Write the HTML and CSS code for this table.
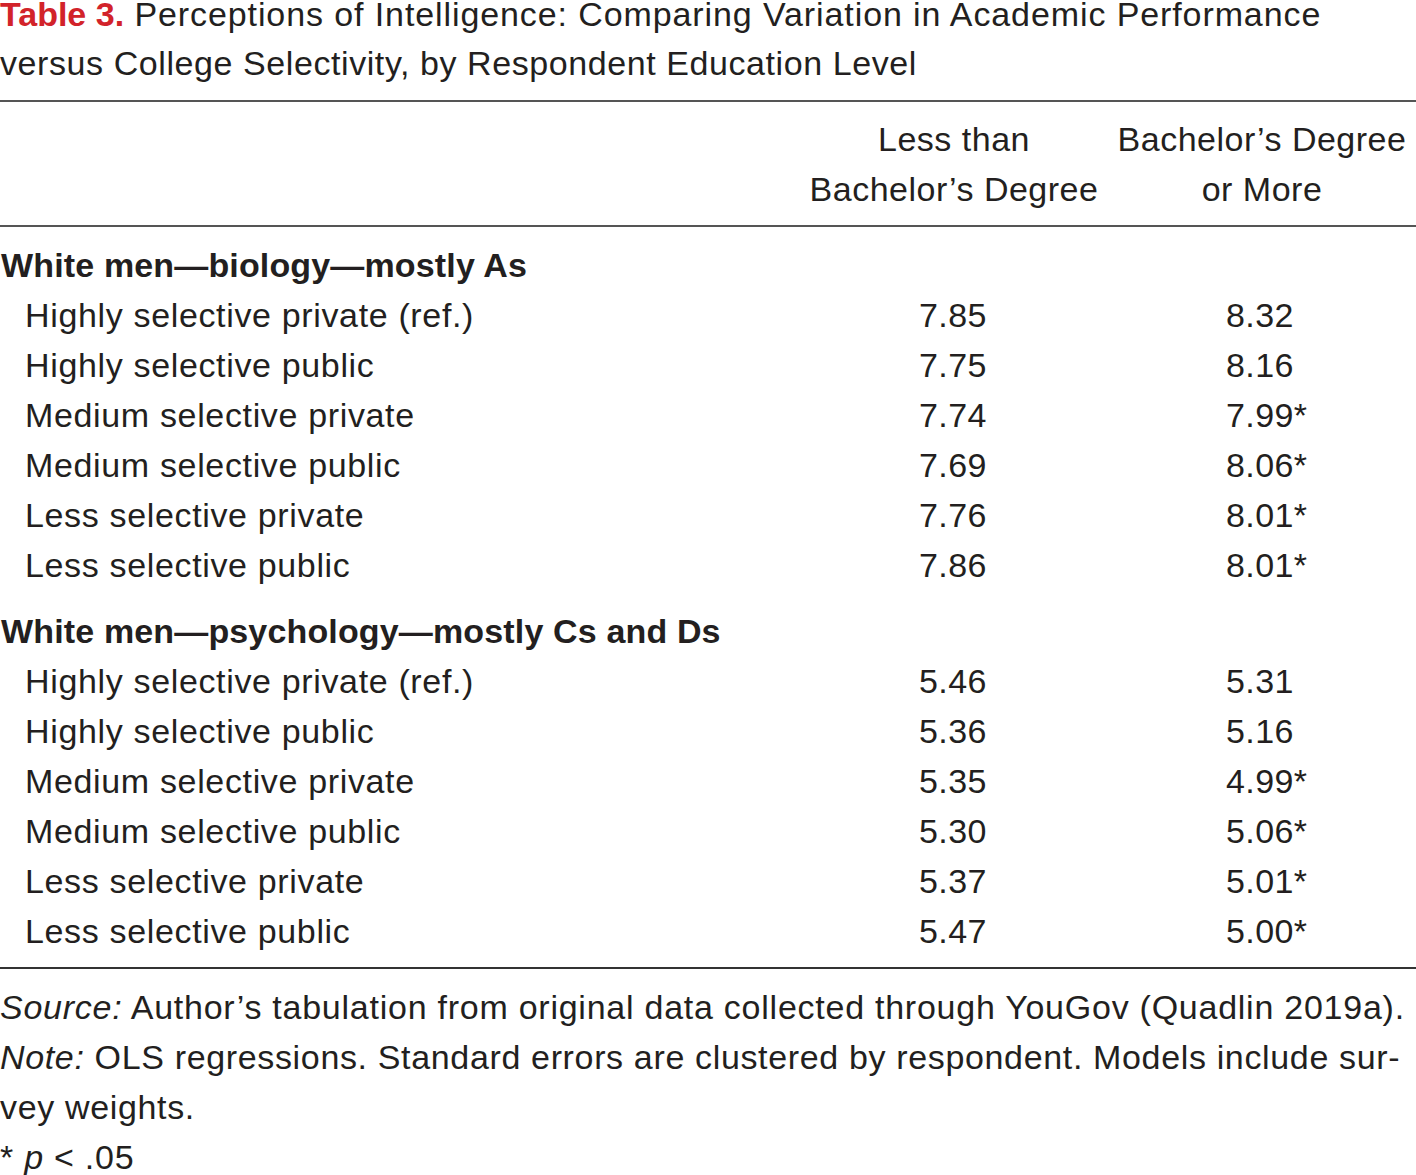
FILE: index.html
```html
<!DOCTYPE html>
<html lang="en">
<head>
<meta charset="utf-8">
<title>Table 3</title>
<link rel="stylesheet" href="styles.css">
</head>
<body>
<div class="page">
  <p class="caption"><span class="label">Table 3.</span> Perceptions of Intelligence: Comparing Variation in Academic Performance<br><span class="cap2">versus College Selectivity, by Respondent Education Level</span></p>
  <table class="data">
    <colgroup>
      <col class="c-label">
      <col class="c-val">
      <col class="c-val">
    </colgroup>
    <thead>
      <tr>
        <th class="h-empty"></th>
        <th>Less than<br>Bachelor’s Degree</th>
        <th>Bachelor’s Degree<br>or More</th>
      </tr>
    </thead>
    <tbody>
      <tr class="group first"><td colspan="3">White men—biology—mostly As</td></tr>
      <tr><td class="row-label">Highly selective private (ref.)</td><td class="num n1">7.85</td><td class="num n2">8.32</td></tr>
      <tr><td class="row-label">Highly selective public</td><td class="num n1">7.75</td><td class="num n2">8.16</td></tr>
      <tr><td class="row-label">Medium selective private</td><td class="num n1">7.74</td><td class="num n2">7.99*</td></tr>
      <tr><td class="row-label">Medium selective public</td><td class="num n1">7.69</td><td class="num n2">8.06*</td></tr>
      <tr><td class="row-label">Less selective private</td><td class="num n1">7.76</td><td class="num n2">8.01*</td></tr>
      <tr><td class="row-label">Less selective public</td><td class="num n1">7.86</td><td class="num n2">8.01*</td></tr>
      <tr class="group second"><td colspan="3">White men—psychology—mostly Cs and Ds</td></tr>
      <tr><td class="row-label">Highly selective private (ref.)</td><td class="num n1">5.46</td><td class="num n2">5.31</td></tr>
      <tr><td class="row-label">Highly selective public</td><td class="num n1">5.36</td><td class="num n2">5.16</td></tr>
      <tr><td class="row-label">Medium selective private</td><td class="num n1">5.35</td><td class="num n2">4.99*</td></tr>
      <tr><td class="row-label">Medium selective public</td><td class="num n1">5.30</td><td class="num n2">5.06*</td></tr>
      <tr><td class="row-label">Less selective private</td><td class="num n1">5.37</td><td class="num n2">5.01*</td></tr>
      <tr class="last"><td class="row-label">Less selective public</td><td class="num n1">5.47</td><td class="num n2">5.00*</td></tr>
    </tbody>
  </table>
  <div class="notes">
    <p><em>Source:</em> Author’s tabulation from original data collected through YouGov (Quadlin 2019a).</p>
    <p class="note2"><em>Note:</em> OLS regressions. Standard errors are clustered by respondent. Models include sur-<br>vey weights.</p>
    <p>* <em>p</em> &lt; .05</p>
  </div>
</div>
</body>
</html>
```

FILE: styles.css
```css
html, body {
  margin: 0;
  padding: 0;
  background: #ffffff;
}

body {
  font-family: "Liberation Sans", Arial, sans-serif;
  font-size: 34px;
  color: #231f20;
  letter-spacing: 0.6px;
}

.page {
  width: 1416px;
  overflow: hidden;
}

.caption {
  margin: 0;
  margin-top: -10px;
  line-height: 49px;
  padding-bottom: 12px;
  white-space: nowrap;
  letter-spacing: 0.9px;
}

.caption .label {
  color: #d2232a;
  font-weight: bold;
  letter-spacing: 0;
}

.caption .cap2 {
  letter-spacing: 0.58px;
}

.data {
  width: 1416px;
  border-collapse: collapse;
  table-layout: fixed;
}

.c-label { width: 800px; }
.c-val { width: 308px; }

.data thead tr {
  border-top: 2px solid #555;
  border-bottom: 2px solid #555;
}

.data th {
  font-weight: normal;
  text-align: center;
  line-height: 50px;
  padding: 12px 0 11px 0;
  white-space: nowrap;
  letter-spacing: 0.5px;
}

.data td {
  padding: 0;
  line-height: 50px;
  white-space: nowrap;
}

.group td {
  font-weight: bold;
  padding-left: 1px;
  letter-spacing: 0.15px;
}

.group.first td { padding-top: 13px; }
.group.second td { padding-top: 16px; }

.row-label {
  padding-left: 25px !important;
  letter-spacing: 0.65px;
}

.num { text-align: left; letter-spacing: 0.4px; }
.n1 { padding-left: 119px !important; }
.n2 { padding-left: 118px !important; }

.last td {
  padding-bottom: 11px !important;
}

.data tbody {
  border-bottom: 2px solid #333;
}

.notes {
  padding-top: 13px;
}

.notes p {
  margin: 0;
  line-height: 50px;
  white-space: nowrap;
  letter-spacing: 0.75px;
}

.notes .note2 {
  letter-spacing: 0.65px;
}
```
